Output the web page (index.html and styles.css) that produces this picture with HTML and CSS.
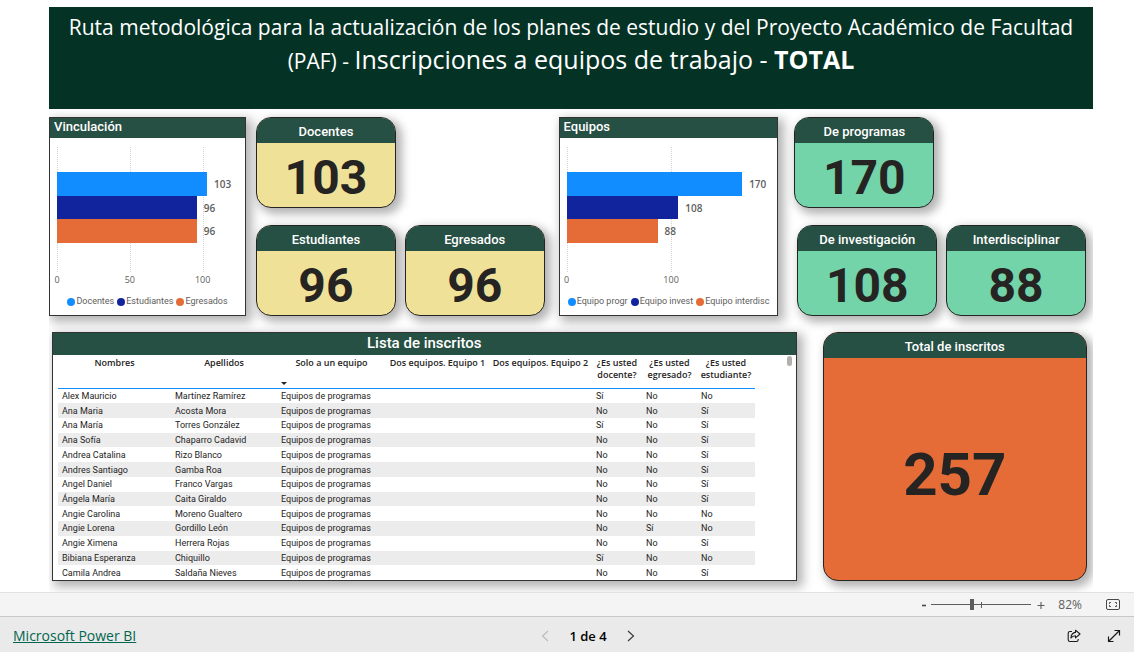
FILE: index.html
```
<!DOCTYPE html>
<html lang="es">
<head>
<meta charset="utf-8">
<meta name="viewport" content="width=device-width, initial-scale=1">
<title>Inscripciones a equipos de trabajo</title>
<link rel="stylesheet" href="styles.css">
</head>
<body>
<main class="stage">
  <div class="canvas">
    <header class="banner">
      <h1 class="banner-title">Ruta metodológica para la actualización de los planes de estudio y del Proyecto Académico de Facultad (PAF) - <span class="banner-large">Inscripciones a equipos de trabajo - <b>TOTAL</b></span></h1>
    </header>

    <div class="row row-top">
      <section class="panel chart chart-links">
        <h2 class="panel-title">Vinculación</h2>
        <div class="plot">
          <i class="grid-line" style="left:0%"></i><i class="grid-line" style="left:40%"></i><i class="grid-line" style="left:80%"></i>
          <div class="bars">
            <div class="bar-row"><div class="bar blue" style="width:82.4%"></div><span class="bar-value">103</span></div>
            <div class="bar-row"><div class="bar navy" style="width:76.8%"></div><span class="bar-value">96</span></div>
            <div class="bar-row"><div class="bar orange" style="width:76.8%"></div><span class="bar-value">96</span></div>
          </div>
        </div>
        <div class="axis"><span class="tick" style="left:0%">0</span><span class="tick" style="left:40%">50</span><span class="tick" style="left:80%">100</span></div>
        <ul class="legend">
          <li><i class="dot blue"></i>Docentes</li>
          <li><i class="dot navy"></i>Estudiantes</li>
          <li><i class="dot orange"></i>Egresados</li>
        </ul>
      </section>

      <div class="cards cards-links">
        <div class="card-row">
          <section class="card sand"><h2 class="card-title">Docentes</h2><p class="card-value">103</p></section>
          <div class="card-space"></div>
        </div>
        <div class="card-row">
          <section class="card sand"><h2 class="card-title">Estudiantes</h2><p class="card-value">96</p></section>
          <section class="card sand"><h2 class="card-title">Egresados</h2><p class="card-value">96</p></section>
        </div>
      </div>

      <section class="panel chart chart-teams">
        <h2 class="panel-title">Equipos</h2>
        <div class="plot">
          <i class="grid-line" style="left:0%"></i><i class="grid-line" style="left:51%"></i>
          <div class="bars">
            <div class="bar-row"><div class="bar blue" style="width:85.7%"></div><span class="bar-value">170</span></div>
            <div class="bar-row"><div class="bar navy" style="width:54.5%"></div><span class="bar-value">108</span></div>
            <div class="bar-row"><div class="bar orange" style="width:44.4%"></div><span class="bar-value">88</span></div>
          </div>
        </div>
        <div class="axis"><span class="tick" style="left:0%">0</span><span class="tick" style="left:51%">100</span></div>
        <ul class="legend">
          <li><i class="dot blue"></i>Equipo progr</li>
          <li><i class="dot navy"></i>Equipo invest</li>
          <li><i class="dot orange"></i>Equipo interdisc</li>
        </ul>
      </section>

      <div class="cards cards-teams">
        <div class="card-row card-row-short">
          <section class="card mint"><h2 class="card-title">De programas</h2><p class="card-value">170</p></section>
          <div class="card-space"></div>
        </div>
        <div class="card-row card-row-inset">
          <section class="card mint"><h2 class="card-title">De investigación</h2><p class="card-value">108</p></section>
          <section class="card mint"><h2 class="card-title">Interdisciplinar</h2><p class="card-value">88</p></section>
        </div>
      </div>
    </div>

    <div class="row row-bottom">
      <section class="panel list">
        <h2 class="list-title">Lista de inscritos</h2>
        <div class="list-body">
          <table class="table">
            <colgroup><col class="c-name"><col class="c-last"><col class="c-solo"><col class="c-team"><col class="c-team"><col class="c-doc"><col class="c-egr"><col class="c-est"></colgroup>
            <thead>
              <tr><th>Nombres</th><th>Apellidos</th><th aria-sort="descending" class="sorted">Solo a un equipo</th><th>Dos equipos. Equipo 1</th><th>Dos equipos. Equipo 2</th><th>¿Es usted docente?</th><th>¿Es usted egresado?</th><th>¿Es usted estudiante?</th></tr>
            </thead>
            <tbody>
              <tr><td>Alex Mauricio</td><td>Martínez Ramírez</td><td>Equipos de programas</td><td></td><td></td><td>Sí</td><td>No</td><td>No</td></tr>
              <tr><td>Ana Maria</td><td>Acosta Mora</td><td>Equipos de programas</td><td></td><td></td><td>No</td><td>No</td><td>Sí</td></tr>
              <tr><td>Ana María</td><td>Torres González</td><td>Equipos de programas</td><td></td><td></td><td>Sí</td><td>No</td><td>Sí</td></tr>
              <tr><td>Ana Sofía</td><td>Chaparro Cadavid</td><td>Equipos de programas</td><td></td><td></td><td>No</td><td>No</td><td>Sí</td></tr>
              <tr><td>Andrea Catalina</td><td>Rizo Blanco</td><td>Equipos de programas</td><td></td><td></td><td>No</td><td>No</td><td>Sí</td></tr>
              <tr><td>Andres Santiago</td><td>Gamba Roa</td><td>Equipos de programas</td><td></td><td></td><td>No</td><td>No</td><td>Sí</td></tr>
              <tr><td>Angel Daniel</td><td>Franco Vargas</td><td>Equipos de programas</td><td></td><td></td><td>No</td><td>No</td><td>Sí</td></tr>
              <tr><td>Ángela María</td><td>Caita Giraldo</td><td>Equipos de programas</td><td></td><td></td><td>No</td><td>No</td><td>Sí</td></tr>
              <tr><td>Angie Carolina</td><td>Moreno Gualtero</td><td>Equipos de programas</td><td></td><td></td><td>No</td><td>No</td><td>No</td></tr>
              <tr><td>Angie Lorena</td><td>Gordillo León</td><td>Equipos de programas</td><td></td><td></td><td>No</td><td>Sí</td><td>No</td></tr>
              <tr><td>Angie Ximena</td><td>Herrera Rojas</td><td>Equipos de programas</td><td></td><td></td><td>No</td><td>No</td><td>Sí</td></tr>
              <tr><td>Bibiana Esperanza</td><td>Chiquillo</td><td>Equipos de programas</td><td></td><td></td><td>Sí</td><td>No</td><td>No</td></tr>
              <tr><td>Camila Andrea</td><td>Saldaña Nieves</td><td>Equipos de programas</td><td></td><td></td><td>No</td><td>No</td><td>Sí</td></tr>
            </tbody>
          </table>
          <div class="scroll-thumb"></div>
        </div>
      </section>
      <section class="card total"><h2 class="card-title">Total de inscritos</h2><p class="card-value">257</p></section>
    </div>
  </div>
</main>

<div class="zoom-bar">
  <button class="zoom-btn" type="button" aria-label="Alejar"><svg width="8" height="8" viewBox="0 0 8 8"><path d="M2 4.5h4" stroke="#4a4846" stroke-width="1.6"/></svg></button>
  <div class="slider-box">
    <input class="slider" type="range" min="0" max="100" value="40" aria-label="Zoom">
    <i class="slider-mark"></i>
  </div>
  <button class="zoom-btn" type="button" aria-label="Acercar"><svg width="8" height="8" viewBox="0 0 8 8"><path d="M0.500 4.500h7M4 1v7" stroke="#605e5c" stroke-width="1.100"/></svg></button>
  <span class="zoom-value">82%</span>
  <button class="fit-btn" type="button" aria-label="Ajustar a la página"><svg width="14" height="11" viewBox="0 0 14 11" fill="none" stroke="#4a4846"><rect x="0.500" y="0.500" width="13" height="10" rx="1.500"/><path d="M5 3.500h-1.500v1.500M9 3.500h1.500v1.500M5 7.500h-1.500v-1.500M9 7.500h1.500v-1.500" stroke-width="0.900"/></svg></button>
</div>

<footer class="footer">
  <a class="brand" href="#">Microsoft Power BI</a>
  <nav class="pager" aria-label="Páginas">
    <button class="icon-btn" type="button" disabled aria-label="Página anterior"><svg width="8" height="12" viewBox="0 0 8 12" fill="none" stroke="#bdbbb9" stroke-width="1.100"><path d="M7 1L1.500 6L7 11"/></svg></button>
    <span class="page-label">1 de 4</span>
    <button class="icon-btn" type="button" aria-label="Página siguiente"><svg width="8" height="12" viewBox="0 0 8 12" fill="none" stroke="#3b3a39" stroke-width="1.200"><path d="M1 1L6.500 6L1 11"/></svg></button>
  </nav>
  <div class="actions">
    <button class="icon-btn" type="button" aria-label="Compartir"><svg width="14" height="14" viewBox="0 0 14 14" fill="none" stroke="#1b1a19" stroke-width="1.100" stroke-linejoin="round"><path d="M5 2.500H3A1.800 1.800 0 0 0 1.200 4.300v6.400A1.800 1.800 0 0 0 3 12.500h6.400a1.800 1.800 0 0 0 1.800-1.800V10"/><path d="M8.500 1.200L13 5L8.500 8.800V6.700C6.600 6.700 5.200 7.300 3.900 9C4.200 5.800 5.800 3.700 8.500 3.400Z"/></svg></button>
    <button class="icon-btn" type="button" aria-label="Pantalla completa"><svg width="14" height="14" viewBox="0 0 14 14" fill="none" stroke="#1b1a19" stroke-width="1.200"><path d="M1.500 12.500L12.500 1.500M7.500 1.500h5v5M1.500 7.500v5h5"/></svg></button>
  </div>
</footer>
</body>
</html>
```
FILE: styles.css
```
* { box-sizing: border-box; }

body {
  margin: 0;
  min-height: 100vh;
  display: flex;
  flex-direction: column;
  background: #fff;
  color: #252423;
  font-family: "Open Sans", "Noto Sans", sans-serif;
}

h1, h2, p, ul { margin: 0; padding: 0; font-weight: 400; }
button { border: 0; background: none; padding: 0; font: inherit; cursor: pointer; }
svg { display: block; }

.stage {
  flex: 1;
  padding: 7px 41px 0 49px;
}

.canvas { overflow: hidden; padding-bottom: 11px; }

.banner {
  background: #043326;
  color: #fff;
  height: 102px;
  padding: 4px 12px;
  text-align: center;
}
.banner-title { font-size: 21px; line-height: 32px; }
.banner-large { font-size: 25px; }
.banner-large b { font-weight: 700; }

.row { display: flex; }
.row-top { margin-top: 8px; padding-right: 7px; }
.row-bottom { margin-top: 16px; padding: 0 6px 0 3px; gap: 26px; }

.panel {
  background: #fff;
  border: 1px solid #333;
  box-shadow: 4px 4px 10px 2px rgba(0, 0, 0, 0.3);
}

/* Bar charts */
.chart { display: flex; flex-direction: column; }
.chart-links { flex: 196 1 0; margin-right: 10px; }
.chart-teams { flex: 219 1 0; margin: 0 16px 0 14px; }
.panel-title {
  background: #275044;
  color: #fff;
  font: 500 13px/18px Roboto, sans-serif;
  height: 20px;
  padding-left: 4px;
}
.plot {
  position: relative;
  margin: 9px 6px 0 7px;
  height: 125px;
  padding-top: 25px;
}
.grid-line {
  position: absolute;
  top: 0;
  bottom: 0;
  border-left: 1px dotted #d5d3d1;
}
.bars {
  position: relative;
  display: flex;
  flex-direction: column;
  height: 71px;
}
.bar-row { flex: 1; display: flex; align-items: center; gap: 7px; }
.bar { align-self: stretch; }
.bar-value { font-size: 10px; font-weight: 600; color: #605e5c; }
.blue { background: #118dff; }
.navy { background: #12239e; }
.orange { background: #e66c37; }
.axis { position: relative; height: 16px; margin: 0 6px 0 7px; }
.tick {
  position: absolute;
  top: 0;
  transform: translateX(-50%);
  font-size: 9px;
  line-height: 16px;
  color: #605e5c;
}
.legend {
  display: flex;
  justify-content: center;
  gap: 3px;
  margin-top: 7px;
  list-style: none;
  font: 400 9px/13px Roboto, sans-serif;
  color: #605e5c;
  white-space: nowrap;
}
.legend li { display: flex; align-items: center; gap: 1px; }
.dot { width: 8px; height: 8px; border-radius: 50%; }

/* Number cards */
.cards { display: flex; flex-direction: column; gap: 17px; }
.cards-links { flex: 290 1 0; }
.cards-teams { flex: 293 1 0; }
.card-row { display: flex; gap: 9px; }
.card-row-inset { padding-left: 3px; }
.card-row-short { padding-right: 3px; }
.card-space { flex: 1 1 2px; }
.card {
  flex: 1 1 0;
  display: flex;
  flex-direction: column;
  min-height: 91px;
  border: 1px solid #252423;
  border-radius: 15px;
  box-shadow: 4px 4px 10px 2px rgba(0, 0, 0, 0.3);
}
.card-title {
  background: #275044;
  border-radius: 14px 14px 0 0;
  color: #fff;
  font: 500 13px/25px Roboto, sans-serif;
  height: 25px;
  padding-top: 1px;
  text-align: center;
}
.card-value {
  flex: 1;
  display: flex;
  align-items: center;
  justify-content: center;
  padding-top: 5px;
  font: 700 48px/56px Roboto, sans-serif;
}
.sand { background: #f0e199; }
.mint { background: #73d4a9; }
.total { flex: 264 1 0; background: #e66c37; }
.total .card-value { font-size: 60px; padding-top: 11px; }

/* Enrolment list */
.list { flex: 747 1 0; height: 249px; overflow: hidden; }
.list-title {
  background: #275044;
  color: #fff;
  font: 500 15px/20px Roboto, sans-serif;
  height: 22px;
  text-align: center;
}
.list-body {
  display: flex;
  justify-content: space-between;
  align-items: flex-start;
  padding: 0 4px 0 5px;
}
.scroll-thumb {
  width: 5px;
  height: 10px;
  margin-top: 1px;
  border-radius: 3px;
  background: #b3b0ad;
}
.table {
  width: 95%;
  height: 225px;
  table-layout: fixed;
  border-collapse: collapse;
  font-size: 9px;
  line-height: 12px;
}
.c-name { width: 113px; }
.c-last { width: 106px; }
.c-solo { width: 109px; }
.c-team { width: 103px; }
.c-doc { width: 50px; }
.c-egr { width: 55px; }
.c-est { width: 58px; }
.table th {
  height: 33px;
  padding: 2px 0 0;
  border-bottom: 1px solid #118dff;
  font-weight: 600;
  text-align: center;
  vertical-align: top;
}
.sorted { position: relative; }
.sorted::after {
  content: "";
  position: absolute;
  left: 4px;
  bottom: 3px;
  border: 3px solid transparent;
  border-top-color: #252423;
  border-bottom: 0;
}
.table td { padding: 0 0 0 4px; font-family: Roboto, sans-serif; white-space: nowrap; }
.table tbody tr:nth-child(even) { background: #ececec; }

/* Zoom and page bars */
.zoom-bar {
  display: flex;
  align-items: center;
  justify-content: flex-end;
  height: 24px;
  padding-right: 14px;
  background: #f4f4f4;
  border-top: 1px solid #e1e1e1;
  color: #605e5c;
}
.slider-box { position: relative; display: flex; align-items: center; width: 100px; margin: 0 6px 0 3px; }
.slider {
  appearance: none;
  width: 100%;
  height: 12px;
  margin: 0;
  background: linear-gradient(#605e5c, #605e5c) center / 100% 1px no-repeat;
}
.slider::-webkit-slider-thumb {
  appearance: none;
  width: 4px;
  height: 11px;
  background: #605e5c;
}
.slider-mark { position: absolute; left: 50%; top: 3px; width: 1px; height: 6px; background: #605e5c; }
.zoom-value { margin: 0 24px 0 13px; font-size: 12px; line-height: 22px; }

.footer {
  display: grid;
  grid-template-columns: 1fr auto 1fr;
  align-items: center;
  height: 37px;
  padding: 2px 13px 0;
  background: #eaeaea;
  border-top: 1px solid #c8c8c8;
}
.brand { font-size: 14px; line-height: 20px; color: #00664f; }
.pager { display: flex; align-items: center; gap: 20px; padding-left: 42px; }
.page-label { font-size: 13px; font-weight: 600; color: #000; }
.actions { display: flex; justify-content: flex-end; gap: 26px; }
```
